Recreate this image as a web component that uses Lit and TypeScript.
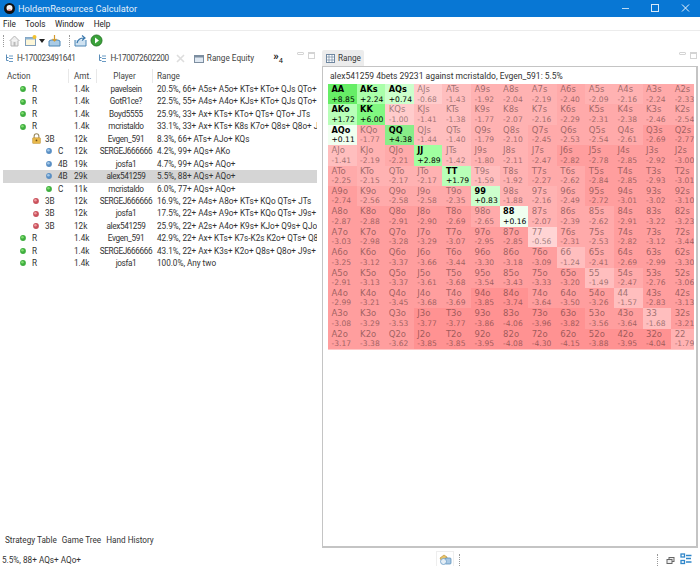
import { LitElement, css, html, svg } from 'lit'
import { customElement } from 'lit/decorators.js'

type Row = { level: number; dot: string; action: string; amt: string; player: string; range: string; selected?: boolean }

const ROWS: Row[] = [
  { level: 0, dot: 'green', action: 'R', amt: '1.4k', player: 'pavelsein', range: '20.5%, 66+ A5s+ A5o+ KTs+ KTo+ QJs QTo+' },
  { level: 0, dot: 'green', action: 'R', amt: '1.4k', player: 'GotR1ce?', range: '22.5%, 55+ A4s+ A4o+ KJs+ KTo+ QJs QTo+' },
  { level: 0, dot: 'green', action: 'R', amt: '1.4k', player: 'Boyd5555', range: '25.9%, 33+ Ax+ KTs+ KTo+ QTs+ QTo+ JTs' },
  { level: 0, dot: 'green', action: 'R', amt: '1.4k', player: 'mcristaldo', range: '33.1%, 33+ Ax+ KTs+ K8s K7o+ Q8s+ Q8o+ J9s+ J9o+' },
  { level: 1, dot: 'lock', action: '3B', amt: '12k', player: 'Evgen_591', range: '8.3%, 66+ ATs+ AJo+ KQs' },
  { level: 2, dot: 'blue', action: 'C', amt: '12k', player: 'SERGEJ666666', range: '4.2%, 99+ AQs+ AKo' },
  { level: 2, dot: 'blue', action: '4B', amt: '19k', player: 'josfa1', range: '4.7%, 99+ AQs+ AQo+' },
  { level: 2, dot: 'blue', action: '4B', amt: '29k', player: 'alex541259', range: '5.5%, 88+ AQs+ AQo+', selected: true },
  { level: 2, dot: 'green', action: 'C', amt: '11k', player: 'mcristaldo', range: '6.0%, 77+ AQs+ AQo+' },
  { level: 1, dot: 'red', action: '3B', amt: '12k', player: 'SERGEJ666666', range: '16.9%, 22+ A4s+ A8o+ KTs+ KQo QTs+ JTs' },
  { level: 1, dot: 'red', action: '3B', amt: '12k', player: 'josfa1', range: '17.5%, 22+ A4s+ A9o+ KTs+ KQo QTs+ J9s+ T9s' },
  { level: 1, dot: 'red', action: '3B', amt: '12k', player: 'alex541259', range: '25.9%, 22+ A2s+ A4o+ K9s+ KJo+ Q9s+ QJo' },
  { level: 0, dot: 'green', action: 'R', amt: '1.4k', player: 'Evgen_591', range: '42.9%, 22+ Ax+ KTs+ K7s-K2s K2o+ QTs+ Q8o+' },
  { level: 0, dot: 'green', action: 'R', amt: '1.4k', player: 'SERGEJ666666', range: '43.1%, 22+ Ax+ K3s+ K2o+ Q8s+ Q8o+ J9s+ J9o+' },
  { level: 0, dot: 'green', action: 'R', amt: '1.4k', player: 'josfa1', range: '100.0%, Any two' },
]

const GRID = `AA +8.85,AKs +2.24,AQs +0.74,AJs -0.68,ATs -1.43,A9s -1.92,A8s -2.04,A7s -2.19,A6s -2.40,A5s -2.09,A4s -2.16,A3s -2.24,A2s -2.33
AKo +1.72,KK +6.00,KQs -1.00,KJs -1.41,KTs -1.38,K9s -1.77,K8s -2.07,K7s -2.16,K6s -2.29,K5s -2.31,K4s -2.38,K3s -2.46,K2s -2.54
AQo +0.11,KQo -1.77,QQ +4.38,QJs -1.44,QTs -1.40,Q9s -1.79,Q8s -2.10,Q7s -2.45,Q6s -2.53,Q5s -2.54,Q4s -2.61,Q3s -2.69,Q2s -2.77
AJo -1.41,KJo -2.19,QJo -2.21,JJ +2.89,JTs -1.42,J9s -1.80,J8s -2.11,J7s -2.47,J6s -2.82,J5s -2.78,J4s -2.85,J3s -2.92,J2s -3.00
ATo -2.25,KTo -2.15,QTo -2.17,JTo -2.17,TT +1.79,T9s -1.59,T8s -1.92,T7s -2.27,T6s -2.62,T5s -2.84,T4s -2.85,T3s -2.93,T2s -3.01
A9o -2.74,K9o -2.56,Q9o -2.58,J9o -2.58,T9o -2.35,99 +0.83,98s -1.88,97s -2.16,96s -2.49,95s -2.72,94s -3.01,93s -3.02,92s -3.10
A8o -2.87,K8o -2.88,Q8o -2.91,J8o -2.90,T8o -2.69,98o -2.65,88 +0.16,87s -2.07,86s -2.39,85s -2.62,84s -2.91,83s -3.22,82s -3.23
A7o -3.03,K7o -2.98,Q7o -3.28,J7o -3.29,T7o -3.07,97o -2.95,87o -2.85,77 -0.56,76s -2.31,75s -2.53,74s -2.82,73s -3.12,72s -3.44
A6o -3.25,K6o -3.12,Q6o -3.37,J6o -3.66,T6o -3.44,96o -3.30,86o -3.18,76o -3.09,66 -1.24,65s -2.41,64s -2.69,63s -2.99,62s -3.30
A5o -2.91,K5o -3.13,Q5o -3.37,J5o -3.61,T5o -3.68,95o -3.54,85o -3.43,75o -3.33,65o -3.20,55 -1.49,54s -2.47,53s -2.76,52s -3.06
A4o -2.99,K4o -3.21,Q4o -3.45,J4o -3.68,T4o -3.69,94o -3.85,84o -3.74,74o -3.64,64o -3.50,54o -3.26,44 -1.57,43s -2.83,42s -3.13
A3o -3.08,K3o -3.29,Q3o -3.53,J3o -3.77,T3o -3.77,93o -3.86,83o -4.06,73o -3.96,63o -3.82,53o -3.56,43o -3.64,33 -1.68,32s -3.21
A2o -3.17,K2o -3.38,Q2o -3.62,J2o -3.85,T2o -3.85,92o -3.95,82o -4.08,72o -4.30,62o -4.15,52o -3.88,42o -3.95,32o -4.04,22 -1.79`

const CELLS = GRID.split('\n').flatMap((l) => l.split(',').map((c) => c.split(' ')))

function cellColor(v: number) {
  if (v >= 8) return '#66ee66'
  if (v >= 5) return '#80f880'
  if (v >= 4) return '#88ee88'
  if (v >= 2.5) return '#a0ffa0'
  if (v >= 2) return '#aaffaa'
  if (v >= 1) return '#b8ffb8'
  if (v >= 0.5) return '#ccffcc'
  if (v >= 0) return '#f0fff0'
  if (v > -0.67) return '#ffd4d4'
  if (v > -1.2) return '#ffcccc'
  if (v > -1.7) return '#ffbebe'
  if (v > -2.2) return '#ffb2b2'
  if (v > -2.67) return '#ffaaaa'
  if (v > -3.7) return '#ff9e9e'
  return '#ff9292'
}

const dotColors: Record<string, [string, string]> = {
  green: ['#3fae3f', '#7fdc6f'],
  blue: ['#5a8fc4', '#a4c8e8'],
  red: ['#c9525c', '#ee9aa0'],
}

const dot = (kind: string) => {
  const [edge, light] = dotColors[kind]
  return html`<svg class="dot" viewBox="0 0 8 8">
    <circle cx="4" cy="4" r="2.9" fill=${edge}></circle>
    <circle cx="3.4" cy="3.2" r="1.3" fill=${light}></circle>
  </svg>`
}

const lock = html`<svg class="lock" viewBox="0 0 14 14">
  <path d="M4 6.5V4a3 3 0 0 1 6 0v2.5" fill="none" stroke="#9a8a60" stroke-width="1.4"></path>
  <rect x="2" y="6" width="10" height="7.5" rx="1" fill="#e8b84a" stroke="#b98a2a" stroke-width=".6"></rect>
  <circle cx="7" cy="9.4" r="1.1" fill="#6b4a14"></circle>
</svg>`

const treeIcon = html`<svg class="ico-sm" viewBox="0 0 9 9" fill="none" stroke="#5b8db8">
  <path d="M1.5 .5v6h2M1.5 3.5h2"></path>
  <path d="M4 2h4M4 4.5h4M4 7.5h4" stroke="#6a9bc5" stroke-width="1.2"></path>
</svg>`

const chromeBtns = (cls: string) => html`<div class=${`chrome ${cls}`}>
  <span class="chrome-min"></span><span class="chrome-max"></span>
</div>`

const toolIcon = (body: ReturnType<typeof svg>, w = 13) =>
  html`<svg class="tool" style="width:${w}px" viewBox="0 0 ${w} 13">${body}</svg>`

@customElement('app-root')
export class AppRoot extends LitElement {
  static styles = css`
    :host {
      display: flex;
      flex-direction: column;
      width: 700px;
      height: 566px;
      overflow: hidden;
      background: #fff;
      color: #3a3a3a;
      font: 8.2px/12px Roboto, sans-serif;
    }
    svg { display: block; flex: none; }

    .title {
      display: flex;
      align-items: center;
      height: 17px;
      background: #0877d4;
      color: #e4f0fa;
      padding: 0 0 0 4px;
      font-size: 9.2px;
    }
    .title .logo { width: 11px; height: 11px; margin-right: 3px; }
    .title .name { flex: 1; }
    .win { display: flex; width: 90px; }
    .win svg { width: 30px; height: 17px; }

    .menu { display: flex; gap: 9.5px; height: 13px; align-items: center; padding-left: 3px; color: #222; border-bottom: 1px solid #ececec; }

    .toolbar { display: flex; align-items: center; height: 19px; padding-left: 3px; }
    .sep { width: 0; height: 12px; border-left: 1px dotted #999; }
    .tool { height: 13px; }

    .main { flex: 1; display: flex; min-height: 0; }
    .left { width: 322px; display: flex; flex-direction: column; flex: none; }

    .tabs { display: flex; align-items: center; height: 16px; color: #444; }
    .tab { display: flex; align-items: center; gap: 3px; white-space: nowrap; }
    .tab.hand-tab { letter-spacing: -.35px; }
    .ico-sm { width: 9px; height: 9px; }
    .chrome { display: flex; gap: 4px; align-items: flex-start; align-self: flex-start; padding-top: 2px; }
    .chrome-min { width: 7px; height: 3px; border: 1px solid #d4d4d4; border-radius: 1px; box-sizing: border-box; }
    .chrome-max { width: 7px; height: 7px; border: 1px solid #d4d4d4; border-top-width: 2px; box-sizing: border-box; }
    .more { display: flex; align-items: flex-end; margin-left: 19px; color: #111; height: 11px; }
    .more b { font-size: 11px; line-height: 7px; align-self: flex-start; font-weight: 700; }
    .more i { font-size: 7.5px; line-height: 7px; font-style: normal; }

    .table { flex: 1; min-height: 0; padding: 3px 5px 0 3px; }
    .head, .row {
      display: grid;
      grid-template-columns: 66px 28px 56px 1fr;
      white-space: nowrap;
    }
    .head { height: 14px; align-items: center; color: #444; }
    .head > div { height: 14px; line-height: 14px; border-right: 1px solid #e8e8e8; box-sizing: border-box; padding-left: 4px; }
    .head > div:last-child { border-right: 0; }
    .head .player { text-align: center; padding: 0; }
    .head .amt, .row .amt { padding-left: 5px; }
    .row { height: 12.45px; line-height: 12.45px; align-items: center; color: #333; }
    .row.selected { background: #d5d5d5; }
    .row .action { display: flex; align-items: center; height: 100%; }
    .row .player { text-align: center; letter-spacing: -.35px; padding-left: 2px; }
    .row .range { overflow: hidden; padding-left: 4px; letter-spacing: -.03px; }
    .dot { width: 8px; height: 8px; margin-right: 5px; }
    .lock { width: 11px; height: 11px; margin-right: 3px; margin-left: -1px; }

    .bottom-tabs { display: flex; gap: 5px; height: 16px; padding: 0 0 0 5px; align-items: center; color: #333; }

    .right { flex: 1; display: flex; flex-direction: column; min-width: 0; margin-right: 2px; }
    .rtabs { display: flex; height: 16px; align-items: center; justify-content: space-between; }
    .rtab {
      display: flex;
      align-items: center;
      gap: 3px;
      height: 16px;
      padding: 0 3px 0 4px;
      background: #ececec;
      border-radius: 2px 2px 0 0;
    }
    .rchrome { margin-right: 1px; }
    .pane { flex: 1; border: 1px solid #c4c4c4; border-right-width: 2px; border-bottom-width: 2px; background: #fff; padding: 3px 2px 0 5px; min-height: 0; }
    .pane-title { height: 14px; line-height: 12px; color: #333; padding-left: 2px; white-space: nowrap; font-size: 8.5px; }
    .grid {
      display: grid;
      grid-template-columns: repeat(13, 28.6px);
      grid-auto-rows: 20.4px;
      overflow: hidden;
      padding-bottom: 1px;
      background: #ffc8c8;
      font-family: 'DejaVu Sans', sans-serif;
    }
    .cell { padding-left: 3.5px; color: rgba(60, 30, 30, .5); white-space: nowrap; overflow: hidden; }
    .cell .hand { display: block; font-size: 8.5px; line-height: 10.5px; }
    .cell .ev { display: block; font-size: 7.6px; line-height: 9.5px; }
    .cell.pos { color: #000; }
    .cell.pos .hand { font-size: 8.2px; font-weight: 700; }

    .status { display: flex; align-items: flex-end; height: 18px; color: #333; }
    .status .text { width: 434px; padding-left: 2px; flex: none; line-height: 12px; }
    .status .box { width: 18px; height: 15px; border: 1px solid #eee; border-bottom: 0; box-sizing: border-box; display: flex; justify-content: center; align-items: center; }
    .status .sep { margin-left: 5px; }
    .status .grow { flex: 1; }
    .status .s2 { margin-left: 0; margin-right: 8px; }
    .status .tray { margin-bottom: 1px; }
  `

  render() {
    return html`
      <div class="title">
        <svg class="logo" viewBox="0 0 11 11">
          <circle cx="5.5" cy="5.5" r="5.5" fill="#111"></circle>
          <circle cx="5.5" cy="5" r="3" fill="#f4f4f4"></circle>
          <path d="M3 7.5a3 2 0 0 1 5 0z" fill="#c62828"></path>
        </svg>
        <span class="name">HoldemResources Calculator</span>
        <div class="win">
          <svg viewBox="0 0 30 17"><path d="M12 8.5h7" stroke="#bcd9f2"></path></svg>
          <svg viewBox="0 0 30 17"><rect x="11.5" y="4.5" width="7" height="7" fill="none" stroke="#d8e9f8"></rect></svg>
          <svg viewBox="0 0 30 17"><path d="M12 4.5l7 7M19 4.5l-7 7" stroke="#f0f6fc"></path></svg>
        </div>
      </div>
      <div class="menu"><span>File</span><span>Tools</span><span>Window</span><span>Help</span></div>
      <div class="toolbar">
        <span class="sep"></span>
        <span style="width:4px"></span>
        ${toolIcon(svg`<path d="M1.5 7L6.5 2l5 5M3 6.5V12h7V6.5" fill="#eee" stroke="#b5b5b5"></path><rect x="5.5" y="8" width="2" height="4" fill="#bbb"></rect>`)}
        <span style="width:3px"></span>
        ${toolIcon(svg`<rect x="1.5" y="3.5" width="10" height="8" fill="#fdf6d8" stroke="#7f9db9"></rect><path d="M1.5 3.5h10v2h-10z" fill="#8fb4d4"></path><circle cx="10.5" cy="3" r="2" fill="#f2c230"></circle>`)}
        <svg style="width:6px;height:4px;margin:0 3px 0 2px" viewBox="0 0 6 4"><path d="M0 0h6L3 4z" fill="#222"></path></svg>
        ${toolIcon(svg`<path d="M1 7v5h11V7l-2-1H3z" fill="#a9cbe6" stroke="#4d86b5"></path><path d="M6.5 1v6M4.5 5l2 2 2-2" fill="none" stroke="#d39a2c" stroke-width="1.2"></path>`)}
        <span style="width:8px"></span><span class="sep"></span><span style="width:4px"></span>
        ${toolIcon(svg`<path d="M1 6v6h11V6" fill="#cfe2f1" stroke="#4d86b5"></path><path d="M3 9c1-4 3-5 7-5M8 1.5L11 4 8 6.5" fill="none" stroke="#3b78ac" stroke-width="1.2"></path>`)}
        <span style="width:3px"></span>
        ${toolIcon(svg`<circle cx="6.5" cy="6.5" r="5.5" fill="#3aa23a" stroke="#287a28"></circle><path d="M5 3.5l4 3-4 3z" fill="#fff"></path>`)}
      </div>
      <div class="main">
        <div class="left">
          <div class="tabs">
            <div class="tab hand-tab" style="margin-left:5px">${treeIcon}H-170023491641</div>
            <div class="tab hand-tab" style="margin-left:23px">${treeIcon}H-170072602200</div>
            <svg class="ico-sm" style="margin:0 9px 0 7px" viewBox="0 0 9 9"><path d="M1 1l7 7M8 1L1 8" stroke="#ddd" stroke-width="1.6"></path></svg>
            <div class="tab"><svg class="ico-sm" style="width:10px" viewBox="0 0 10 9"><rect x=".5" y="1.5" width="9" height="7" fill="#dfe8f2" stroke="#7d8ea0"></rect><path d="M.5 1.5h9v2h-9z" fill="#7d8ea0"></path></svg>Range Equity</div>
            <div class="more"><b>»</b><i>4</i></div>
            <div style="flex:1"></div>
            ${chromeBtns('')}
            <span style="width:7px"></span>
          </div>
          <div class="table">
            <div class="head">
              <div>Action</div><div class="amt">Amt.</div><div class="player">Player</div><div>Range</div>
            </div>
            ${ROWS.map(
              (r) => html`
                <div class="row ${r.selected ? 'selected' : ''}">
                  <div class="action" style="padding-left:${16 + r.level * 13}px">
                    ${r.dot === 'lock' ? lock : dot(r.dot)}<span>${r.action}</span>
                  </div>
                  <div class="amt">${r.amt}</div>
                  <div class="player">${r.player}</div>
                  <div class="range">${r.range}</div>
                </div>
              `,
            )}
          </div>
          <div class="bottom-tabs"><span>Strategy Table</span><span>Game Tree</span><span>Hand History</span></div>
        </div>
        <div class="right">
          <div class="rtabs">
            <div class="rtab">
              <svg class="ico-sm" viewBox="0 0 9 9"><rect x=".5" y=".5" width="8" height="8" fill="#fff" stroke="#6f87a0"></rect><path d="M.5 3h8M.5 6h8M3 .5v8M6 .5v8" stroke="#6f87a0" stroke-width=".7"></path></svg>
              Range
            </div>
            ${chromeBtns('rchrome')}
          </div>
          <div class="pane">
            <div class="pane-title">alex541259 4bets 29231 against mcristaldo, Evgen_591: 5.5%</div>
            <div class="grid">
              ${CELLS.map(([hand, ev]) => {
                const v = parseFloat(ev)
                return html`<div class="cell ${v >= 0 ? 'pos' : ''}" style="background:${cellColor(v)}">
                  <span class="hand">${hand}</span><span class="ev">${ev}</span>
                </div>`
              })}
            </div>
          </div>
        </div>
      </div>
      <div class="status">
        <div class="text">5.5%, 88+ AQs+ AQo+</div>
        <div class="box">
          <svg style="width:13px;height:13px" viewBox="0 0 13 13">
            <path d="M1 5l4-3 3 2v3H2z" fill="#e8c46a" stroke="#b98a2a" stroke-width=".6"></path>
            <rect x="6" y="5" width="6" height="6" rx="1" fill="#a8c8e4" stroke="#4d86b5" stroke-width=".7"></rect>
            <circle cx="4.5" cy="8.5" r="3" fill="#e4eef6" stroke="#6a9bc5" stroke-width=".8"></circle>
          </svg>
        </div>
        <span class="sep"></span>
        <div class="grow"></div>
        <span class="sep s2"></span>
        <svg class="tray" style="width:9px;height:9px;margin-right:5px" viewBox="0 0 9 9" fill="#eee" stroke="#666"><rect x="3" y="1.5" width="5" height="4"></rect><rect x="1" y="3.5" width="5" height="4"></rect></svg>
        <svg class="tray" style="width:12px;height:12px;margin-right:8px" viewBox="0 0 12 12" fill="none" stroke="#2f86c9" stroke-width="1.3"><rect x="1" y="1" width="3.5" height="3"></rect><rect x="1" y="7.5" width="3.5" height="3"></rect><path d="M6 2.5h5.5M6 5.5h5M6 9h5.5"></path></svg>
      </div>
    `
  }
}
